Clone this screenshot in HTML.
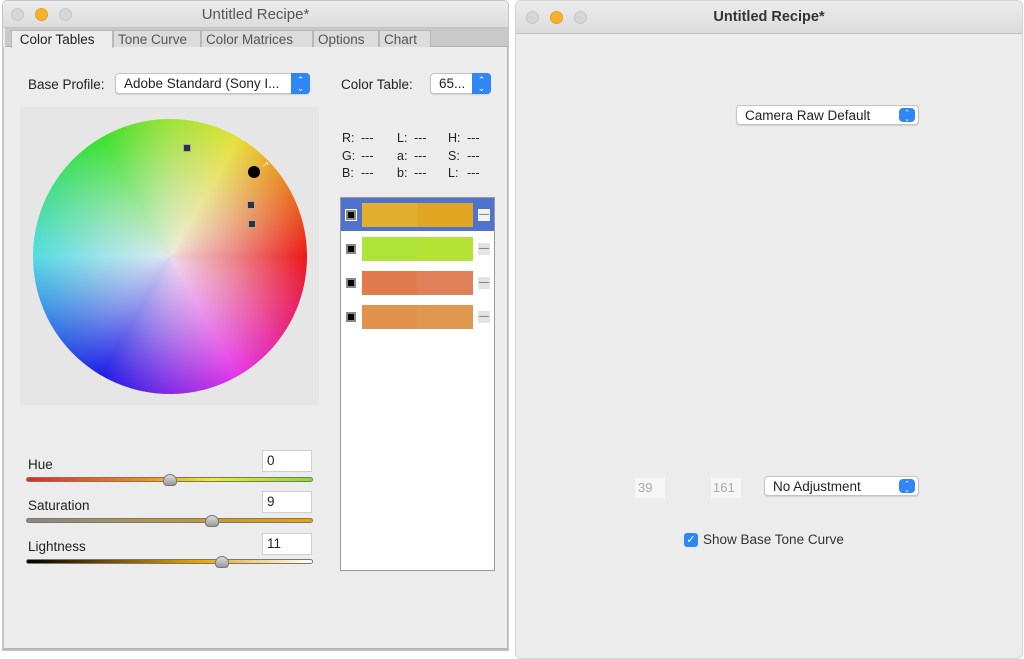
<!DOCTYPE html>
<html><head><meta charset="utf-8"><style>
*{box-sizing:border-box;margin:0;padding:0}
body{width:1024px;height:659px;background:#fff;position:relative;overflow:hidden;font-family:"Liberation Sans",sans-serif;color:#222}
.abs{position:absolute}
.win{position:absolute;background:#ececec;border:1px solid #c6c6c6;border-radius:5px 5px 0 0;overflow:hidden}
.title{position:absolute;left:0;right:0;top:0;height:27px;background:linear-gradient(#ececec,#dcdcdc);border-bottom:1px solid #c2c2c2;text-align:center;font-size:15px;line-height:27px;color:#555}
.dot{position:absolute;top:7px;width:13px;height:13px;border-radius:50%;background:#d6d6d6;border:1px solid #c8c8c8}
.dot.y{background:#f6b22a;border-color:#e1a020}
.tabs{position:absolute;left:2px;top:27px;width:505px;height:19px;background:#c9c9c9;border-bottom:1px solid #b0b0b0}
.tab{position:absolute;top:2px;height:17px;font-size:13.5px;line-height:18px;color:#555;background:#dcdcdc;border:1px solid #b8b8b8;border-bottom:none;padding-left:4px;white-space:nowrap;overflow:hidden}
.tab.sel{background:#ececec;color:#222;top:2px;height:18px}
.lbl{position:absolute;font-size:13.5px;color:#222}
.pop{position:absolute;background:#fff;border:1px solid #c4c4c4;border-radius:4px;font-size:13.5px;line-height:19px;padding-left:8px;box-shadow:0 1px 1px rgba(0,0,0,.12)}
.pop .ar{position:absolute;right:-1px;top:-1px;bottom:-1px;width:19px;background:#2f86f5;border-radius:0 4px 4px 0;color:#fff;font-size:9px;line-height:8px;text-align:center;padding-top:3px}
.sw{position:absolute;left:362px;width:111px;height:24px}
.cb{position:absolute;left:346px;width:10px;height:10px;border:2px solid #888;background:#000;outline:1px solid #fff}
.mn{position:absolute;left:478px;width:12px;height:12px;background:#e4e4e4;font-size:10px;line-height:11px;text-align:center;color:#555}
.inp{position:absolute;width:50px;height:22px;background:#fff;border:1px solid #cfcfcf;font-size:13.5px;line-height:20px;padding-left:4px}
.trk{position:absolute;left:26px;width:287px;height:5px;border-radius:3px;border:1px solid #777}
.th{position:absolute;width:14px;height:12px;background:linear-gradient(#ddd,#999);border:1px solid #777;border-radius:7px 7px 4px 4px}
.mk{position:absolute;width:6px;height:6px;background:#333;outline:1px solid #aaa}
.ct{position:absolute;font-size:12.5px;color:#222}
</style></head><body>

<div class="win" style="left:2px;top:0;width:507px;height:651px">
 <div class="title">Untitled Recipe*</div>
 <div class="dot" style="left:8px"></div><div class="dot y" style="left:32px"></div><div class="dot" style="left:56px"></div>
 <div class="tabs">
  <div class="tab sel" style="left:6px;width:102px">&nbsp;Color Tables</div>
  <div class="tab" style="left:108px;width:88px">Tone Curve</div>
  <div class="tab" style="left:196px;width:112px">Color Matrices</div>
  <div class="tab" style="left:308px;width:66px">Options</div>
  <div class="tab" style="left:374px;width:52px">Chart</div>
 </div>
 <div style="position:absolute;left:0;right:0;top:46px;bottom:0;border-left:1px solid #c4c4c4;border-right:1px solid #b8b8b8;border-bottom:2px solid #b8b8b8"></div>
</div>

<div class="lbl" style="left:28px;top:77px">Base Profile:</div>
<div class="pop" style="left:115px;top:73px;width:195px;height:21px">Adobe Standard (Sony I...<div class="ar">⌃<br>⌄</div></div>
<div class="lbl" style="left:341px;top:77px">Color Table:</div>
<div class="pop" style="left:430px;top:73px;width:61px;height:21px">65...<div class="ar">⌃<br>⌄</div></div>

<div class="abs" style="left:20px;top:107px;width:299px;height:298px;background:#e6e6e6"></div>
<div class="abs" style="left:33px;top:119px;width:274px;height:275px;border-radius:50%;background:conic-gradient(hsl(85,75%,55%),hsl(58,78%,55%) 30deg,hsl(0,85%,50%) 90deg,hsl(300,78%,55%) 150deg,hsl(240,80%,50%) 210deg,hsl(183,72%,60%) 270deg,hsl(115,75%,52%) 330deg,hsl(85,75%,55%))"></div>
<div class="abs" style="left:33px;top:119px;width:274px;height:275px;border-radius:50%;background:radial-gradient(circle,rgba(240,236,242,.9) 0%,rgba(235,235,240,.5) 35%,rgba(255,255,255,0) 72%)"></div>
<div class="mk" style="left:184px;top:145px"></div>
<div class="mk" style="left:248px;top:202px"></div>
<div class="mk" style="left:249px;top:221px"></div>
<div class="abs" style="left:248px;top:166px;width:12px;height:12px;border-radius:50%;background:#000"></div>
<div class="abs" style="left:258px;top:156px;color:#fff;font-size:12px;font-weight:bold;transform:rotate(-35deg)">→</div>

<div class="ct" style="left:342px;top:131px">R:</div><div class="ct" style="left:361px;top:131px">---</div>
<div class="ct" style="left:397px;top:131px">L:</div><div class="ct" style="left:414px;top:131px">---</div>
<div class="ct" style="left:448px;top:131px">H:</div><div class="ct" style="left:467px;top:131px">---</div>
<div class="ct" style="left:342px;top:149px">G:</div><div class="ct" style="left:361px;top:149px">---</div>
<div class="ct" style="left:397px;top:149px">a:</div><div class="ct" style="left:414px;top:149px">---</div>
<div class="ct" style="left:448px;top:149px">S:</div><div class="ct" style="left:467px;top:149px">---</div>
<div class="ct" style="left:342px;top:166px">B:</div><div class="ct" style="left:361px;top:166px">---</div>
<div class="ct" style="left:397px;top:166px">b:</div><div class="ct" style="left:414px;top:166px">---</div>
<div class="ct" style="left:448px;top:166px">L:</div><div class="ct" style="left:467px;top:166px">---</div>

<div class="abs" style="left:340px;top:197px;width:155px;height:374px;background:#fff;border:1px solid #999"></div>
<div class="abs" style="left:341px;top:198px;width:153px;height:33px;background:#4f72cf"></div>
<div class="sw" style="top:203px;background:linear-gradient(90deg,#e2b02c 50%,#e2a623 50%)"></div>
<div class="sw" style="top:237px;background:linear-gradient(90deg,#aee43a 50%,#b4e235 50%)"></div>
<div class="sw" style="top:271px;background:linear-gradient(90deg,#e27b4c 50%,#df8058 50%)"></div>
<div class="sw" style="top:305px;background:linear-gradient(90deg,#e2924a 50%,#e0984f 50%)"></div>
<div class="cb" style="top:210px"></div><div class="cb" style="top:244px"></div><div class="cb" style="top:278px"></div><div class="cb" style="top:312px"></div>
<div class="mn" style="top:209px;background:#f2f2f2">—</div><div class="mn" style="top:243px">—</div><div class="mn" style="top:277px">—</div><div class="mn" style="top:311px">—</div>

<div class="lbl" style="left:28px;top:457px">Hue</div>
<div class="inp" style="left:262px;top:450px">0</div>
<div class="trk" style="top:477px;background:linear-gradient(90deg,#e22 0%,#f80 40%,#ee2 65%,#8d2 100%)"></div>
<div class="th" style="left:163px;top:474px"></div>
<div class="lbl" style="left:28px;top:498px">Saturation</div>
<div class="inp" style="left:262px;top:491px">9</div>
<div class="trk" style="top:518px;background:linear-gradient(90deg,#888,#e9a400)"></div>
<div class="th" style="left:205px;top:515px"></div>
<div class="lbl" style="left:28px;top:539px">Lightness</div>
<div class="inp" style="left:262px;top:533px">11</div>
<div class="trk" style="top:559px;background:linear-gradient(90deg,#000,#e9a400 60%,#fff)"></div>
<div class="th" style="left:215px;top:556px"></div>

<div class="win" style="left:515px;top:0;width:508px;height:659px;border-radius:6px;border-color:#d4d4d4">
 <div class="title" style="height:33px;line-height:33px;font-weight:bold;color:#333;font-size:14.5px">Untitled Recipe*</div>
 <div class="dot" style="left:10px;top:10px"></div><div class="dot y" style="left:34px;top:10px"></div><div class="dot" style="left:58px;top:10px"></div>
</div>
<div class="pop" style="left:736px;top:105px;width:183px;height:20px;font-size:13.5px">Camera Raw Default<div class="ar" style="width:16px;right:3px;top:2px;bottom:2px;border-radius:4px;font-size:7px;line-height:6px">⌃<br>⌄</div></div>
<div class="abs" style="left:635px;top:478px;width:30px;height:20px;background:#f6f6f6;color:#aaa;font-size:13px;line-height:20px;padding-left:3px">39</div>
<div class="abs" style="left:711px;top:478px;width:30px;height:20px;background:#f6f6f6;color:#aaa;font-size:13px;line-height:20px;padding-left:2px">161</div>
<div class="pop" style="left:764px;top:476px;width:155px;height:20px;font-size:13.5px">No Adjustment<div class="ar" style="width:16px;right:3px;top:2px;bottom:2px;border-radius:4px;font-size:7px;line-height:6px">⌃<br>⌄</div></div>
<div class="abs" style="left:684px;top:533px;width:14px;height:14px;background:#2f86f5;border-radius:3px;color:#fff;font-size:11px;line-height:14px;text-align:center">✓</div>
<div class="lbl" style="left:703px;top:532px;font-size:13.5px;color:#333">Show Base Tone Curve</div>
</body></html>
